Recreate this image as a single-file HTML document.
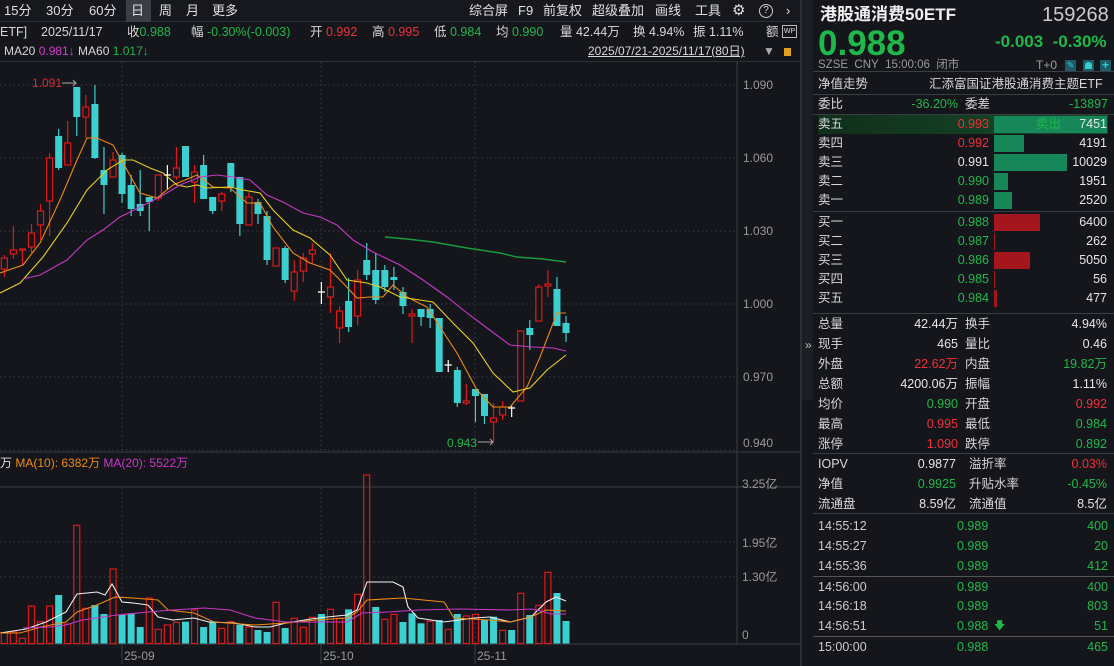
<!DOCTYPE html>
<html><head><meta charset="utf-8">
<style>
*{margin:0;padding:0;box-sizing:border-box}
body{width:1114px;height:666px;background:#14161b;overflow:hidden;position:relative;font-family:"Liberation Sans","Noto Sans CJK SC",sans-serif;color:#d8d8d8;font-size:12.5px}
.a{position:absolute;white-space:nowrap}
.g{color:#1fb84a}.r{color:#f0303a}.w{color:#e6e6e6}.gr{color:#9a9a9a}
.tb{position:absolute;top:0;height:22px;line-height:22px;font-size:13px;color:#e0e0e0}
.rp .a{line-height:19px}
.ln{position:absolute;height:1px;background:#3a3d44}
</style></head><body>
<!-- toolbar -->
<div class="a" style="left:0;top:0;width:800px;height:22px;background:#16181d;border-bottom:1px solid #2c2f36"></div>
<div class="a" style="left:126px;top:0;width:25px;height:22px;background:#3b3e46"></div>
<div class="tb" style="left:4px">15分</div>
<div class="tb" style="left:46px">30分</div>
<div class="tb" style="left:89px">60分</div>
<div class="tb" style="left:131px">日</div>
<div class="tb" style="left:159px">周</div>
<div class="tb" style="left:186px">月</div>
<div class="tb" style="left:212px">更多</div>
<div class="tb" style="left:469px">综合屏</div>
<div class="tb" style="left:518px">F9</div>
<div class="tb" style="left:543px">前复权</div>
<div class="tb" style="left:592px">超级叠加</div>
<div class="tb" style="left:655px">画线</div>
<div class="tb" style="left:695px">工具</div>
<div class="tb" style="left:732px;font-size:15px">⚙</div>
<div class="a" style="left:759px;top:4px;width:14px;height:14px;border:1px solid #ccc;border-radius:50%;font-size:10px;line-height:12px;text-align:center">?</div>
<div class="tb" style="left:786px">›</div>
<!-- row 2 -->
<div class="a" style="top:23px;left:0;font-size:12.5px;line-height:18px;width:800px">
<span class="a" style="left:0">ETF]</span>
<span class="a" style="left:41px">2025/11/17</span>
<span class="a" style="left:127px">收<span class="g">0.988</span></span>
<span class="a" style="left:191px">幅 <span class="g">-0.30%(-0.003)</span></span>
<span class="a" style="left:310px">开 <span class="r">0.992</span></span>
<span class="a" style="left:372px">高 <span class="r">0.995</span></span>
<span class="a" style="left:434px">低 <span class="g">0.984</span></span>
<span class="a" style="left:496px">均 <span class="g">0.990</span></span>
<span class="a" style="left:560px">量 42.44万</span>
<span class="a" style="left:633px">换 4.94%</span>
<span class="a" style="left:693px">振 1.11%</span>
<span class="a" style="left:766px">额</span>
</div>
<div class="a" style="left:782px;top:25px;width:15px;height:13px;border:1px solid #bbb;font-size:7px;line-height:11px;text-align:center;color:#ddd">WP</div>
<div class="a" style="top:43px;left:4px;font-size:12px;line-height:17px">MA20 <span style="color:#d43cd4">0.981↓</span> MA60 <span class="g">1.017↓</span></div>
<div class="a" style="top:43px;left:588px;font-size:12px;line-height:17px;text-decoration:underline">2025/07/21-2025/11/17(80日)</div>
<div class="a" style="top:43px;left:763px;font-size:12px;line-height:17px;color:#aaa">▼</div>
<div class="a" style="left:784px;top:48px;width:7px;height:8px;background:#e0a020"></div>
<div class="a" style="left:0;top:61px;width:800px;height:1px;background:#2c2f36"></div>

<svg class="a" style="left:0;top:0" width="800" height="666" id="sv">
<g stroke="#3a3d44" stroke-dasharray="1.5,3" stroke-width="1">
<line x1="0" y1="85" x2="738" y2="85"/><line x1="0" y1="158" x2="738" y2="158"/><line x1="0" y1="231" x2="738" y2="231"/><line x1="0" y1="304" x2="738" y2="304"/><line x1="0" y1="377" x2="738" y2="377"/><line x1="0" y1="450" x2="738" y2="450"/>
<line x1="122" y1="62" x2="122" y2="452"/><line x1="321" y1="62" x2="321" y2="452"/><line x1="475" y1="62" x2="475" y2="452"/>
<line x1="122" y1="488" x2="122" y2="644"/><line x1="321" y1="488" x2="321" y2="644"/><line x1="475" y1="488" x2="475" y2="644"/>
<line x1="0" y1="542" x2="738" y2="542"/><line x1="0" y1="577" x2="738" y2="577"/>
</g>
<line x1="737" y1="62" x2="737" y2="644" stroke="#3a3d44"/>
<line x1="0" y1="452" x2="800" y2="452" stroke="#3a3d44"/>
<line x1="0" y1="487" x2="800" y2="487" stroke="#3a3d44"/>
<line x1="0" y1="644" x2="800" y2="644" stroke="#3a3d44"/>
<line x1="122" y1="644" x2="122" y2="664" stroke="#3a3d44"/><line x1="321" y1="644" x2="321" y2="664" stroke="#3a3d44"/><line x1="475" y1="644" x2="475" y2="664" stroke="#3a3d44"/>
<g fill="#9a9a9a" font-size="12" font-family="Liberation Sans, Noto Sans CJK SC, sans-serif">
<text x="743" y="89">1.090</text><text x="743" y="162">1.060</text><text x="743" y="235">1.030</text><text x="743" y="308">1.000</text><text x="743" y="381">0.970</text><text x="743" y="447">0.940</text>
<text x="742" y="488">3.25亿</text><text x="742" y="547">1.95亿</text><text x="742" y="581">1.30亿</text><text x="742" y="639">0</text>
<text x="124" y="660">25-09</text><text x="323" y="660">25-10</text><text x="477" y="660">25-11</text>
</g>
<text x="32" y="87" fill="#d03030" font-size="12" font-family="Liberation Sans, sans-serif">1.091</text>
<path d="M62 83H76M73 80L76 83L73 86" stroke="#aaa" fill="none"/>
<text x="447" y="447" fill="#1fb84a" font-size="12" font-family="Liberation Sans, sans-serif">0.943</text>
<path d="M478 442H493M490 439L493 442L490 445" stroke="#aaa" fill="none"/>
<g id="cd"></g>
<g fill="none" stroke-width="1.1">
<polyline stroke="#f08a10" points="0,273 23,265 40,243 60,200 77,160 87,138 97,138 113,145 127,170 140,193 157,198 173,185 197,175 213,187 230,188 247,203 260,203 273,227 293,253 310,263 330,270 343,283 357,298 370,297 383,297 393,285 407,297 427,307 440,327 457,353 477,390 493,407 510,407 527,387 540,357 557,313 566,313"/>
<polyline stroke="#e8d020" points="0,293 20,283 43,257 67,223 87,190 107,170 123,160 133,160 150,168 163,173 177,185 187,187 197,185 207,188 230,187 243,190 260,193 273,210 293,230 310,238 330,255 347,280 367,283 380,287 400,297 433,302 453,323 473,343 493,373 513,392 530,388 547,370 566,355"/>
<polyline stroke="#c838c8" points="23,279 40,275 67,260 87,240 103,230 120,217 140,207 160,197 180,185 200,177 217,175 233,177 250,180 267,195 283,202 303,213 320,217 337,225 353,240 373,252 400,265 423,280 447,297 467,313 487,328 510,345 533,347 553,348 566,351"/>
<polyline stroke="#1a9a3a" stroke-width="1.4" points="385,237 407,239 433,242 467,248 500,253 517,257 543,259 566,262"/>
</g>
<g id="vb"></g>
<g fill="none" stroke-width="1.1">
<polyline stroke="#f0f0f0" points="0,633 26,629 46,622 66,612 77,594 97,592 105,595 112,584 122,602 133,603 148,605 158,617 173,620 194,618 209,622 235,623 255,627 270,627 286,623 311,619 327,617 347,615 357,610 367,582 393,582 403,587 408,607 418,618 444,622 459,620 474,618 490,617 510,622 531,617 546,602 556,597 566,601"/>
<polyline stroke="#f08a10" points="0,633 20,633 41,627 66,622 77,612 97,605 115,597 133,598 158,600 168,610 194,613 214,622 255,625 286,623 316,620 347,618 357,612 367,600 403,598 444,602 454,618 490,620 510,622 531,617 546,610 566,611"/>
<polyline stroke="#c838c8" points="23,628 51,627 66,625 82,620 117,615 148,612 173,610 204,608 230,610 255,618 286,622 316,622 347,622 362,613 388,612 418,610 459,609 510,610 531,609 541,611 551,614 566,614"/>
</g>
</svg>
<div class="a" style="top:455px;left:0;font-size:12px;line-height:16px"><span style="color:#ddd">万</span> <span style="color:#f08a10">MA(10): 6382万</span> <span style="color:#c838c8">MA(20): 5522万</span></div>

<!-- right panel -->
<div class="a" style="left:800px;top:0;width:2px;height:666px;background:#2c2f36"></div>
<div class="a" style="left:802px;top:0;width:11px;height:400px;background:#1c1e24"></div>
<div class="a" style="left:805px;top:338px;font-size:12px;color:#bbb">»</div>
<div class="rp">
<div class="a" style="left:820px;top:4px;font-size:17px;font-weight:bold;color:#f0f0f0;line-height:22px">港股通消费50ETF</div>
<div class="a" style="left:1042px;top:3px;font-size:20px;color:#ccc;line-height:24px">159268</div>
<div class="a g" style="left:818px;top:24px;font-size:35px;font-weight:bold;line-height:40px">0.988</div>
<div class="a g" style="left:995px;top:31px;font-size:17px;line-height:22px;font-weight:bold">-0.003&nbsp; -0.30%</div>
<div class="a gr" style="left:818px;top:56px;font-size:11.5px">SZSE&nbsp; CNY&nbsp; 15:00:06&nbsp; 闭市</div>
<div class="a gr" style="left:1036px;top:56px;font-size:12px">T+0</div>
<div class="a" style="left:1065px;top:60px;width:11px;height:11px;background:#1d5a6a;color:#3cc;font-size:9px;line-height:11px;text-align:center">✎</div>
<div class="a" style="left:1083px;top:60px;width:11px;height:11px;background:#1d5a6a"><div style="margin:2px 2px;width:7px;height:7px;background:#3cc;border-radius:3px 3px 0 0"></div></div>
<div class="a" style="left:1100px;top:60px;width:11px;height:11px;background:#1d5a6a;color:#3cc;font-size:12px;line-height:11px;text-align:center;font-weight:bold">+</div>
<div class="ln" style="left:813px;top:71px;width:301px"></div>
<div class="a" style="left:818px;top:75px">净值走势</div>
<div class="a" style="left:929px;top:75px">汇添富国证港股通消费主题ETF</div>
<div class="ln" style="left:813px;top:94px;width:301px"></div>
<div class="a" style="left:818px;top:95px">委比</div>
<div class="a g" style="right:156px;top:95px">-36.20%</div>
<div class="a" style="left:965px;top:95px">委差</div>
<div class="a g" style="right:6px;top:95px">-13897</div>
<div class="ln" style="left:813px;top:114px;width:301px"></div>
<div class="a" style="left:818px;top:115px;width:290px;height:19px;background:linear-gradient(90deg,#10301c,#164a28)"></div>
<div id="ob"></div>
<div class="ln" style="left:813px;top:211px;width:301px"></div>
<div class="ln" style="left:813px;top:313px;width:301px"></div>
<div id="st"></div>
<div class="ln" style="left:813px;top:453px;width:301px"></div>
<div class="ln" style="left:813px;top:513px;width:301px"></div>
<div class="ln" style="left:813px;top:576px;width:301px;background:#555"></div>
<div class="ln" style="left:813px;top:636px;width:301px;background:#555"></div>
</div>
<script>
var C=[["r",258,269,255,277],["r",250,254,226,259],["r",249,250,249,265],["r",233,247,224,253],["r",211,225,204,240],["r",158,201,153,236],["c",136,168,129,170],["r",143,165,121,165],["c",87,117,87,136],["r",107,117,95,138],["c",104,158,85,159],["c",170,185,147,214],["r",160,177,152,177],["c",155,194,153,203],["c",185,209,175,216],["c",204,211,170,216],["c",197,202,197,231],["r",175,198,175,201],["w",175,176,165,190],["r",168,177,147,180],["c",146,177,146,177],["r",172,182,165,203],["c",165,199,155,199],["c",197,211,197,214],["r",194,201,192,211],["c",163,187,163,192],["c",177,224,177,236],["r",197,225,192,225],["c",202,214,199,224],["c",216,260,211,265],["r",248,266,248,266],["c",248,280,246,283],["r",272,291,260,301],["r",258,271,253,282],["r",250,254,243,263],["w",292,293,282,304],["r",287,297,253,313],["r",311,328,306,343],["c",301,327,278,332],["r",280,316,270,325],["c",260,275,243,280],["c",270,300,253,304],["c",270,287,265,292],["c",277,280,267,290],["c",292,306,287,314],["r",314,316,309,343],["c",309,317,309,326],["c",309,318,304,328],["c",318,372,318,372],["w",365,366,360,372],["c",370,403,367,407],["r",401,403,384,405],["c",389,396,389,422],["c",394,416,394,424],["r",418,422,403,443],["r",407,415,401,420],["w",408,409,406,417],["r",331,401,331,401],["c",328,335,320,350],["r",287,321,284,321],["r",284,286,270,297],["c",289,326,277,326],["c",323,333,316,342]];
var s="";
C.forEach(function(d,i){var x=4.3+i*9.06;var col=d[0]=="r"?"#e01818":d[0]=="c"?"#3ccfcf":"#ffffff";
s+='<line x1="'+x+'" y1="'+d[3]+'" x2="'+x+'" y2="'+d[4]+'" stroke="'+col+'" stroke-width="1.2"/>';
if(d[0]=="w"){s+='<line x1="'+(x-3.5)+'" y1="'+d[1]+'" x2="'+(x+3.5)+'" y2="'+d[1]+'" stroke="#fff" stroke-width="1.3"/>';}
else if(d[0]=="r"){s+='<rect x="'+(x-3)+'" y="'+d[1]+'" width="6" height="'+Math.max(1,d[2]-d[1])+'" fill="#14161b" stroke="'+col+'" stroke-width="1.2"/>';}
else{s+='<rect x="'+(x-3.5)+'" y="'+d[1]+'" width="7" height="'+Math.max(1.5,d[2]-d[1])+'" fill="'+col+'"/>';}});
document.getElementById("cd").innerHTML=s;
var V=[[8,548,"r"],[27,545,"r"],[45,565,"r"],[63,468,"r"],[80,515,"r"],[98,468,"r"],[116,435,"c"],[134,522,"r"],[151,226,"r"],[170,475,"r"],[187,465,"c"],[205,492,"c"],[222,357,"r"],[240,494,"c"],[258,490,"c"],[275,531,"c"],[293,444,"r"],[311,538,"r"],[329,525,"r"],[346,517,"r"],[364,515,"c"],[381,480,"r"],[399,531,"c"],[416,514,"c"],[436,535,"r"],[453,515,"r"],[471,524,"c"],[488,531,"r"],[506,540,"c"],[524,546,"c"],[541,457,"r"],[559,534,"c"],[576,505,"r"],[594,532,"r"],[611,502,"r"],[629,492,"c"],[647,478,"r"],[664,505,"r"],[682,478,"c"],[699,433,"r"],[717,75,"r"],[737,471,"c"],[754,508,"r"],[772,493,"r"],[790,516,"c"],[808,490,"c"],[825,520,"c"],[843,514,"r"],[861,510,"c"],[878,538,"r"],[897,492,"c"],[914,498,"r"],[932,493,"r"],[950,509,"c"],[968,500,"c"],[984,541,"r"],[1002,540,"c"],[1020,430,"r"],[1037,495,"c"],[1055,466,"r"],[1073,367,"r"],[1092,429,"c"],[1110,513,"c"]];
s="";V.forEach(function(v,i){var x=4.3+i*9.06;var y=450+v[1]/3;var h=643.5-y;
if(v[2]=="r")s+='<rect x="'+(x-3)+'" y="'+y+'" width="6" height="'+h+'" fill="none" stroke="#e01818" stroke-width="1.2"/>';
else s+='<rect x="'+(x-3.5)+'" y="'+y+'" width="7" height="'+h+'" fill="#3ccfcf"/>';});
document.getElementById("vb").innerHTML=s;
var OB=[["卖五","0.993","r",7451,113,115],["卖四","0.992","r",4191,30,134],["卖三","0.991","w",10029,73,153],["卖二","0.990","g",1951,14,172],["卖一","0.989","g",2520,18,191],["买一","0.988","g",6400,46,213],["买二","0.987","g",262,1,232],["买三","0.986","g",5050,36,251],["买四","0.985","g",56,1,270],["买五","0.984","g",477,3,289]];
s="";OB.forEach(function(o,i){var y=o[5];var bc=i<5?"#17875a":"#a3161e";
s+='<div class="a" style="left:994px;top:'+(y+1)+'px;width:'+o[4]+'px;height:17px;background:'+bc+'"></div>';
s+='<div class="a" style="left:818px;top:'+y+'px">'+o[0]+'</div>';
s+='<div class="a '+o[2]+'" style="right:125px;top:'+y+'px">'+o[1]+'</div>';
s+='<div class="a w" style="right:7px;top:'+y+'px">'+o[3]+'</div>';});
s+='<div class="a g" style="left:1036px;top:115px">卖出</div>';
document.getElementById("ob").innerHTML=s;
var ST=[["总量","42.44万","w","换手","4.94%","w"],["现手","465","w","量比","0.46","w"],["外盘","22.62万","r","内盘","19.82万","g"],["总额","4200.06万","w","振幅","1.11%","w"],["均价","0.990","g","开盘","0.992","r"],["最高","0.995","r","最低","0.984","g"],["涨停","1.090","r","跌停","0.892","g"]];
s="";ST.forEach(function(o,i){var y=315+i*20;
s+='<div class="a" style="left:818px;top:'+y+'px">'+o[0]+'</div><div class="a '+o[2]+'" style="right:156px;top:'+y+'px">'+o[1]+'</div><div class="a" style="left:965px;top:'+y+'px">'+o[3]+'</div><div class="a '+o[5]+'" style="right:7px;top:'+y+'px">'+o[4]+'</div>';});
var IO=[["IOPV","0.9877","w","溢折率","0.03%","r"],["净值","0.9925","g","升贴水率","-0.45%","g"],["流通盘","8.59亿","w","流通值","8.5亿","w"]];
IO.forEach(function(o,i){var y=455+i*20;
s+='<div class="a" style="left:818px;top:'+y+'px">'+o[0]+'</div><div class="a '+o[2]+'" style="right:158px;top:'+y+'px">'+o[1]+'</div><div class="a" style="left:969px;top:'+y+'px">'+o[3]+'</div><div class="a '+o[5]+'" style="right:7px;top:'+y+'px">'+o[4]+'</div>';});
var TK=[["14:55:12","0.989","400",517],["14:55:27","0.989","20",537],["14:55:36","0.989","412",557],["14:56:00","0.989","400",578],["14:56:18","0.989","803",597],["14:56:51","0.988","51",617],["15:00:00","0.988","465",638]];
TK.forEach(function(t){s+='<div class="a" style="left:818px;top:'+t[3]+'px;color:#ccc">'+t[0]+'</div><div class="a g" style="left:957px;top:'+t[3]+'px">'+t[1]+'</div><div class="a g" style="right:6px;top:'+t[3]+'px">'+t[2]+'</div>';});
s+='<div class="a g" style="left:994px;top:617px;font-size:11px">🡇</div>';
document.getElementById("st").innerHTML=s;
</script>
</body></html>
